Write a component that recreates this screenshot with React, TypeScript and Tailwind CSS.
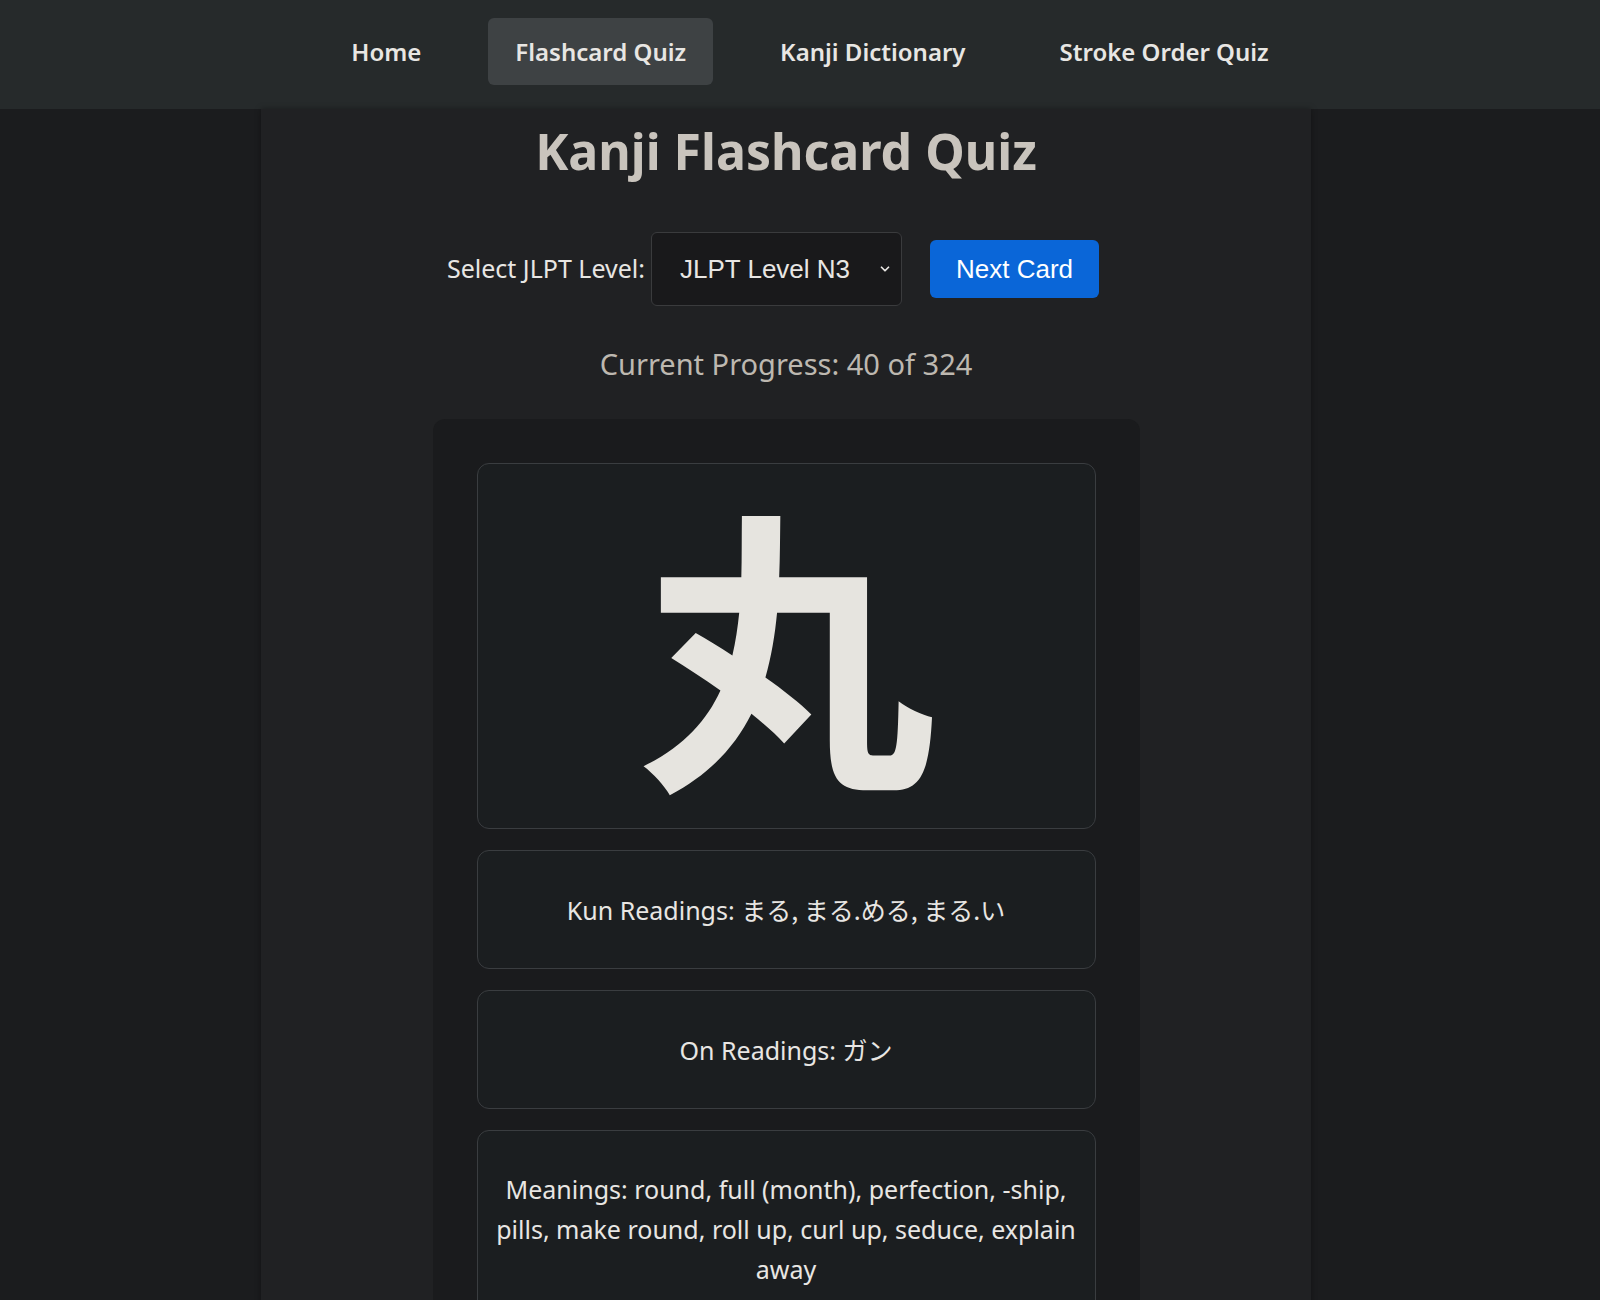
import { useState } from "react";

const ui = { fontFamily: '"Noto Sans", "Noto Sans CJK JP", sans-serif' };
const arial = { fontFamily: '"Liberation Sans", Arial, sans-serif' };
const cjk = { fontFamily: '"Noto Sans CJK JP", "Noto Sans", sans-serif' };

const links = ["Home", "Flashcard Quiz", "Kanji Dictionary", "Stroke Order Quiz"];

export default function App() {
  const [level, setLevel] = useState("N3");

  return (
    <div className="min-h-screen bg-[#1b1c1e] text-[#e8e6e3]" style={ui}>
      {/* navbar */}
      <nav className="h-[109px] bg-[#262a2b] flex items-center justify-center gap-[40px] pl-5 pb-[6px]">
        {links.map((l) => (
          <a
            key={l}
            href="#"
            className={
              "px-[27px] h-[67px] flex items-center rounded-md text-[24px] font-semibold text-[#e8e6e3] " +
              (l === "Flashcard Quiz" ? "bg-[#3e4244]" : "")
            }
          >
            {l}
          </a>
        ))}
      </nav>

      <div className="w-[1050px] ml-[261px] min-h-[1191px] bg-[#202123] shadow-[0_0_6px_rgba(0,0,0,0.35)] flex flex-col items-center">
        <h1 className="mt-[12px] text-[50px] font-bold text-[#c9c4bd] leading-[1.2]">Kanji Flashcard Quiz</h1>

        {/* controls */}
        <div className="mt-[51px] pr-[26px] flex items-center">
          <label className="text-[25px] text-[#e8e6e3] mr-[6px]">Select JLPT Level:</label>
          <div className="relative">
            <select
              value={level}
              onChange={(e) => setLevel(e.target.value)}
              className="appearance-none w-[251px] h-[74px] pl-[28px] pr-10 bg-[#19191b] border border-[#3a3b3d] rounded-md text-[26px] text-[#e8e6e3] outline-none"
              style={arial}
            >
              <option value="N5">JLPT Level N5</option>
              <option value="N4">JLPT Level N4</option>
              <option value="N3">JLPT Level N3</option>
              <option value="N2">JLPT Level N2</option>
              <option value="N1">JLPT Level N1</option>
            </select>
            <svg
              className="absolute right-[10px] top-1/2 -translate-y-1/2 pointer-events-none"
              width="14"
              height="14"
              viewBox="0 0 16 16"
              fill="none"
              stroke="#e8e6e3"
              strokeWidth="2"
              strokeLinecap="round"
              strokeLinejoin="round"
            >
              <path d="M4 6l4 4 4-4" />
            </svg>
          </div>
          <button
            className="ml-[28px] h-[58px] px-[26px] rounded-md bg-[#0a66d8] text-white text-[26px]"
            style={arial}
          >
            Next Card
          </button>
        </div>

        <p className="mt-[36px] text-[29px] text-[#bdb8b0]">Current Progress: 40 of 324</p>

        {/* card */}
        <div className="mt-[33px] w-[707px] p-[44px] rounded-xl bg-[#1a1b1d] flex flex-col gap-[21px]">
          <div className="h-[366px] border border-[#3a3d40] rounded-xl bg-[#1b1e20] flex items-center justify-center pb-[16px]">
            <span className="text-[298px] font-bold leading-none text-[#e6e4df]" style={cjk}>
              丸
            </span>
          </div>
          <div className="border border-[#3a3d40] rounded-xl bg-[#1b1e20] py-[38px] px-5 text-center text-[25px] leading-[40px]">
            Kun Readings: <span style={cjk}>まる, まる.める, まる.い</span>
          </div>
          <div className="border border-[#3a3d40] rounded-xl bg-[#1b1e20] py-[38px] px-5 text-center text-[25px] leading-[40px]">
            On Readings: <span style={cjk}>ガン</span>
          </div>
          <div className="border border-[#3a3d40] rounded-xl bg-[#1b1e20] py-[38px] px-[18px] text-center text-[25px] leading-[40px]">
            Meanings: round, full (month), perfection, -ship, pills, make round, roll up, curl up, seduce, explain away
          </div>
        </div>
      </div>
    </div>
  );
}
